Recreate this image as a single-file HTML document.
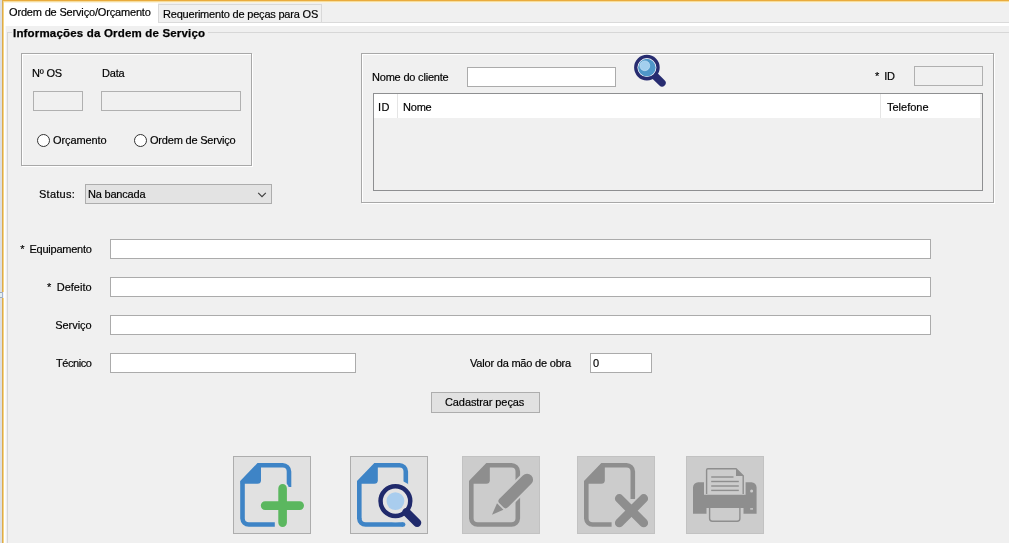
<!DOCTYPE html>
<html>
<head>
<meta charset="utf-8">
<style>
html,body{margin:0;padding:0;}
body{width:1009px;height:543px;background:#f0f0f0;position:relative;overflow:hidden;font-family:"Liberation Sans",sans-serif;font-size:11px;color:#000;}
.a{position:absolute;box-sizing:border-box;}
.t{will-change:transform;-webkit-text-stroke:0.18px #000;position:absolute;white-space:pre;line-height:13px;height:13px;letter-spacing:-0.2px;}
.r{text-align:right;}
.tf{position:absolute;box-sizing:border-box;background:#fff;border:1px solid #ababab;}
.df{position:absolute;box-sizing:border-box;background:#f0f0f0;border:1px solid #b0b0b0;}
.gb{position:absolute;box-sizing:border-box;border:1px solid #a8a8a8;box-shadow:1px 1px 0 #fff, inset 1px 1px 0 #fff;}
.ib{position:absolute;box-sizing:border-box;width:78px;height:78px;top:456px;}
.en{background:#e1e1e1;border:1px solid #adadad;}
.di{background:#cccccc;border:1px solid #c2c2c2;}
svg{position:absolute;left:0;top:0;overflow:visible;}
</style>
</head>
<body>
<!-- window chrome edges -->
<div class="a" style="left:0;top:0;width:1009px;height:1px;background:#e9ab3c;"></div>
<div class="a" style="left:0;top:1px;width:1009px;height:1px;background:#f6dc9c;"></div>
<div class="a" style="left:0;top:2px;width:1009px;height:1px;background:#fbf3dc;"></div>
<div class="a" style="left:0;top:0;width:2px;height:543px;background:#dcdfe4;"></div>
<div class="a" style="left:2px;top:0;width:1px;height:543px;background:#dcaa4d;"></div>
<div class="a" style="left:3px;top:1px;width:1px;height:542px;background:#f5d583;"></div>
<div class="a" style="left:4px;top:3px;width:1px;height:540px;background:#ffffff;"></div>
<div class="a" style="left:5px;top:23px;width:1px;height:520px;background:#fafafa;"></div>

<div class="a" style="left:0;top:292px;width:2px;height:6px;background:#e3f0f3;border-top:1px solid #9eabb8;border-bottom:1px solid #9eabb8;"></div>
<div class="a" style="left:2px;top:292px;width:1px;height:6px;background:#a7b2ca;"></div>
<div class="a" style="left:3px;top:292px;width:1px;height:6px;background:#f2f2f8;"></div>

<!-- tabs -->
<div class="a" style="left:4px;top:3px;width:154px;height:20px;background:#fff;"></div>
<div class="a" style="left:158px;top:4px;width:164px;height:19px;background:#f0f0f0;border:1px solid #d9d9d9;border-bottom:none;"></div>
<div class="a" style="left:4px;top:22px;width:1005px;height:1px;background:#dadada;"></div>
<div class="a" style="left:4px;top:23px;width:1005px;height:3px;background:#fff;"></div>
<div class="a" style="left:4px;top:22px;width:154px;height:2px;background:#fff;"></div>
<div class="t" style="left:9.4px;top:6px;letter-spacing:-0.17px;">Ordem de Serviço/Orçamento</div>
<div class="t" style="left:163px;top:8px;">Requerimento de peças para OS</div>

<!-- titled border -->
<div class="a" style="left:7px;top:32px;width:1002px;height:1px;background:#d7d7d7;"></div>
<div class="a" style="left:7px;top:32px;width:1px;height:511px;background:#d7d7d7;"></div>
<div class="a" style="left:12px;top:27px;width:196px;height:12px;background:#f0f0f0;"></div>
<div class="t" style="left:13.3px;top:27px;font-weight:bold;font-size:11.5px;letter-spacing:0.18px;-webkit-text-stroke:0.25px #000;">Informações da Ordem de Serviço</div>

<!-- OS box -->
<div class="gb" style="left:21px;top:53px;width:231px;height:113px;"></div>
<div class="t" style="left:32px;top:67px;">Nº OS</div>
<div class="t" style="left:102px;top:67px;">Data</div>
<div class="df" style="left:33px;top:91px;width:50px;height:20px;"></div>
<div class="df" style="left:101px;top:91px;width:140px;height:20px;"></div>
<div class="a" style="left:37px;top:134px;width:13px;height:13px;border-radius:50%;background:#fff;border:1px solid #333;"></div>
<div class="t" style="left:53.3px;top:134px;letter-spacing:-0.1px;">Orçamento</div>
<div class="a" style="left:134px;top:134px;width:13px;height:13px;border-radius:50%;background:#fff;border:1px solid #333;"></div>
<div class="t" style="left:150px;top:134px;">Ordem de Serviço</div>

<!-- status -->
<div class="t" style="left:39px;top:188px;letter-spacing:0.25px;">Status:</div>
<div class="a" style="left:85px;top:184px;width:187px;height:20px;background:#e3e3e3;border:1px solid #adadad;"></div>
<div class="t" style="left:88px;top:188px;">Na bancada</div>
<svg width="1009" height="543" style="pointer-events:none"><path d="M258.2 192.8 L262 196.6 L265.8 192.8" fill="none" stroke="#3c3c3c" stroke-width="1.1"/></svg>

<!-- client box -->
<div class="gb" style="left:361px;top:53px;width:633px;height:150px;"></div>
<div class="t" style="left:372px;top:71px;">Nome do cliente</div>
<div class="tf" style="left:467px;top:67px;width:149px;height:20px;"></div>
<div class="t" style="left:875px;top:70px;"><span style="margin-right:2.2px">*</span> ID</div>
<div class="df" style="left:914px;top:66px;width:69px;height:20px;"></div>
<div class="a" style="left:373px;top:93px;width:610px;height:98px;border:1px solid #8e8f91;"></div>
<div class="a" style="left:374px;top:94px;width:606px;height:24px;background:#fff;"></div>
<div class="a" style="left:397px;top:94px;width:1px;height:24px;background:#e5e5e5;"></div>
<div class="a" style="left:880px;top:94px;width:1px;height:24px;background:#e5e5e5;"></div>
<div class="t" style="left:378px;top:101px;letter-spacing:0.5px;">ID</div>
<div class="t" style="left:403px;top:101px;">Nome</div>
<div class="t" style="left:886.5px;top:101px;letter-spacing:0px;">Telefone</div>

<!-- main fields -->
<div class="t r" style="left:0;width:91.6px;top:243px;letter-spacing:-0.25px;"><span style="margin-right:2.4px">*</span> Equipamento</div>
<div class="tf" style="left:110px;top:239px;width:821px;height:20px;"></div>
<div class="t r" style="left:0;width:91.6px;top:281px;letter-spacing:0px;"><span style="margin-right:2.4px">*</span> Defeito</div>
<div class="tf" style="left:110px;top:277px;width:821px;height:20px;"></div>
<div class="t r" style="left:0;width:91.6px;top:319px;letter-spacing:-0.05px;">Serviço</div>
<div class="tf" style="left:110px;top:315px;width:821px;height:20px;"></div>
<div class="t r" style="left:0;width:91.6px;top:357px;letter-spacing:-0.4px;">Técnico</div>
<div class="tf" style="left:110px;top:353px;width:246px;height:20px;"></div>
<div class="t" style="left:470px;top:357px;">Valor da mão de obra</div>
<div class="tf" style="left:590px;top:353px;width:62px;height:20px;"></div>
<div class="t" style="left:593px;top:357px;">0</div>

<!-- button -->
<div class="a" style="left:431px;top:392px;width:109px;height:21px;background:#e1e1e1;border:1px solid #adadad;"></div>
<div class="t" style="left:444.6px;top:396px;letter-spacing:-0.1px;">Cadastrar peças</div>

<!-- icon buttons -->
<div class="ib en" style="left:233px;"></div>
<div class="ib en" style="left:350px;"></div>
<div class="ib di" style="left:462px;"></div>
<div class="ib di" style="left:577px;"></div>
<div class="ib di" style="left:686px;"></div>

<svg id="icons" width="1009" height="543">
<!-- icon 1: new -->
<g transform="translate(240.2,463)">
  <path d="M34.6,61.5 L8.6,61.5 A6.3,6.3 0 0 1 2.3,55.5 L2.3,18.9 L18.3,2.3 L42.5,2.3 A6.3,6.3 0 0 1 48.8,8.6 L48.8,24" fill="none" stroke="#3e84c6" stroke-width="4.6"/>
  <path d="M0.4,18.6 L18,0.4 L20.8,0.4 L20.8,17.2 Q20.8,20.8 17.2,20.8 L0.4,20.8 Z" fill="#3e84c6"/>
  <path d="M42.4,25.4 L42.4,59.6 M24.9,42.6 L59.5,42.6" fill="none" stroke="#e1e1e1" stroke-width="12.4" stroke-linecap="round"/>
  <path d="M42.4,25.4 L42.4,59.6 M24.9,42.6 L59.5,42.6" fill="none" stroke="#5bb75f" stroke-width="8.6" stroke-linecap="round"/>
</g>
<!-- icon 2: search -->
<g transform="translate(357,463)">
  <path d="M46.1,61.5 L8.6,61.5 A6.3,6.3 0 0 1 2.3,55.4 L2.3,18.9 L18.3,2.3 L42.5,2.3 A6.3,6.3 0 0 1 48.8,8.6 L48.8,24" fill="none" stroke="#3e84c6" stroke-width="4.6"/>
  <circle cx="46.1" cy="61.5" r="2.3" fill="#3e84c6"/>
  <path d="M0.4,18.6 L18,0.4 L20.8,0.4 L20.8,17.2 Q20.8,20.8 17.2,20.8 L0.4,20.8 Z" fill="#3e84c6"/>
  <circle cx="38.4" cy="38.1" r="21.2" fill="#e1e1e1"/>
  <circle cx="38.4" cy="38.1" r="14.85" fill="#e3e3e3" stroke="#202a6c" stroke-width="4.5"/>
  <circle cx="38.4" cy="38.1" r="8.9" fill="#a9cdee"/>
  <path d="M49.4,49.1 L60.15,59.85" fill="none" stroke="#202a6c" stroke-width="8.3" stroke-linecap="round"/>
</g>
<!-- icon 3: edit -->
<g transform="translate(469,463)">
  <path d="M2.3,18.9 L18.3,2.3 L42.5,2.3 A6.3,6.3 0 0 1 48.8,8.6 L48.8,55.5 A6.3,6.3 0 0 1 42.5,61.5 L8.6,61.5 A6.3,6.3 0 0 1 2.3,55.5 Z" fill="none" stroke="#8e8e8e" stroke-width="4.6"/>
  <path d="M0.4,18.6 L18,0.4 L20.8,0.4 L20.8,17.2 Q20.8,20.8 17.2,20.8 L0.4,20.8 Z" fill="#8e8e8e"/>
  <g transform="translate(23,51.7) rotate(-45)">
    <path d="M16.5,-6 L49.6,-6 A6,6 0 0 1 49.6,6 L16.5,6 Q13.3,6 13.3,2.8 L13.3,-2.8 Q13.3,-6 16.5,-6 Z" fill="#cccccc" stroke="#cccccc" stroke-width="3.8"/>
    <path d="M16.5,-6 L49.6,-6 A6,6 0 0 1 49.6,6 L16.5,6 Q13.3,6 13.3,2.8 L13.3,-2.8 Q13.3,-6 16.5,-6 Z" fill="#8e8e8e"/>
    <path d="M0,0 L11.6,-4.5 L11.6,4.5 Z" fill="#8e8e8e"/>
  </g>
</g>
<!-- icon 4: delete -->
<g transform="translate(584,463)">
  <path d="M27.6,61.5 L8.6,61.5 A6.3,6.3 0 0 1 2.3,55.5 L2.3,18.9 L18.3,2.3 L42.5,2.3 A6.3,6.3 0 0 1 48.8,8.6 L48.8,36" fill="none" stroke="#8e8e8e" stroke-width="4.6"/>
  <path d="M0.4,18.6 L18,0.4 L20.8,0.4 L20.8,17.2 Q20.8,20.8 17.2,20.8 L0.4,20.8 Z" fill="#8e8e8e"/>
  <path d="M35.3,35.5 L59.7,59.9 M59.7,35.5 L35.3,59.9" fill="none" stroke="#cccccc" stroke-width="12" stroke-linecap="round"/>
  <path d="M35.3,35.5 L59.7,59.9 M59.7,35.5 L35.3,59.9" fill="none" stroke="#8e8e8e" stroke-width="8.8" stroke-linecap="round"/>
</g>
<!-- icon 5: print -->
<g transform="translate(693,463)" fill="#8e8e8e">
  <!-- body -->
  <path d="M0,24.5 A5.2,5.2 0 0 1 5.2,19.3 L11,19.3 L11,31.8 L52.6,31.8 L52.6,19.3 L58.4,19.3 A5.2,5.2 0 0 1 63.6,24.5 L63.6,50.8 L50.5,50.8 L50.5,45 L13.5,45 L13.5,50.8 L0,50.8 Z"/>
  <!-- paper -->
  <path d="M13.6,31 L13.6,7 Q13.6,5.7 14.9,5.7 L43,5.7 L50.2,12.9 L50.2,31" fill="none" stroke="#8e8e8e" stroke-width="1.4"/>
  <path d="M43,5.7 L43,12.9 L50.2,12.9 Z"/>
  <rect x="18.2" y="13.3" width="22.3" height="1.4"/>
  <rect x="18.2" y="17.8" width="27.6" height="1.4"/>
  <rect x="18.2" y="22.3" width="27.6" height="1.4"/>
  <rect x="18.2" y="26.7" width="27.6" height="1.4"/>
  <!-- tray -->
  <path d="M16.6,45 L16.6,55.5 Q16.6,58.2 19.3,58.2 L44.2,58.2 Q46.9,58.2 46.9,55.5 L46.9,45" fill="none" stroke="#8e8e8e" stroke-width="1.4"/>
  <circle cx="58.6" cy="28" r="1.5" fill="#cccccc"/>
  <rect x="57.2" y="45.2" width="2.8" height="1.4" fill="#cccccc"/>
</g>
<!-- header magnifier -->
<g>
  <path d="M655.5,76.5 L662,82.8" fill="none" stroke="#272c70" stroke-width="7.4" stroke-linecap="round"/>
  <circle cx="646.9" cy="67.6" r="11.15" fill="#ffffff" stroke="#272c70" stroke-width="3.3"/>
  <circle cx="646.9" cy="67.6" r="8.8" fill="#4f97c9"/>
  <circle cx="644.8" cy="65.8" r="4.9" fill="#a3cfee" stroke="#c3e1f5" stroke-width="0.7"/>
</g>
</svg>
</body>
</html>
